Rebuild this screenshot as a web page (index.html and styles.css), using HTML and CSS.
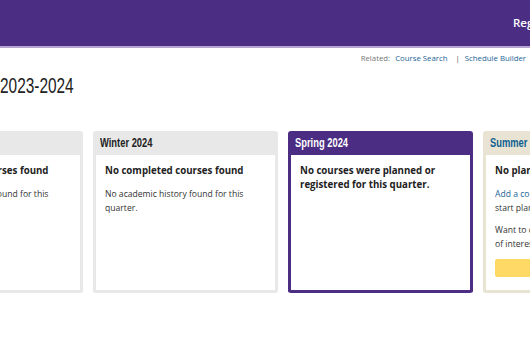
FILE: index.html
```html
<!DOCTYPE html>
<html lang="en">
<head>
  <meta charset="UTF-8">
  <meta name="viewport" content="width=device-width, initial-scale=1">
  <title>Academic Year 2023-2024</title>
  <link rel="stylesheet" href="styles.css">
</head>
<body>

  <header class="topbar">
    <nav class="topnav">
      <a href="#">Registration</a>
    </nav>
  </header>

  <div class="related">
    <span class="related-label">Related:</span>
    <a href="#">Course Search</a>
    <span class="sep">|</span>
    <a href="#">Schedule Builder</a>
  </div>

  <h1 class="year"><span class="cond">2023-2024</span></h1>

  <div class="quarters">
    <section class="card">
      <h2 class="card-head"><span class="cond">Autumn 2023</span></h2>
      <div class="card-body">
        <p class="strong">No completed courses found</p>
        <p>No academic history found for this quarter.</p>
      </div>
    </section>

    <section class="card">
      <h2 class="card-head"><span class="cond">Winter 2024</span></h2>
      <div class="card-body">
        <p class="strong">No completed courses found</p>
        <p>No academic history found for this quarter.</p>
      </div>
    </section>

    <section class="card current">
      <h2 class="card-head"><span class="cond">Spring 2024</span></h2>
      <div class="card-body">
        <p class="strong">No courses were planned or registered for this quarter.</p>
      </div>
    </section>

    <section class="card future">
      <h2 class="card-head"><span class="cond">Summer 2024</span></h2>
      <div class="card-body">
        <p class="strong">No planned courses</p>
        <p><a href="#">Add a course</a> to this quarter to<br>start planning.</p>
        <p>Want to explore more courses<br>of interest?</p>
        <button class="btn">Search Courses</button>
      </div>
    </section>
  </div>

</body>
</html>
```

FILE: styles.css
```css
* { box-sizing: border-box; margin: 0; padding: 0; }

body {
  font-family: 'Open Sans', sans-serif;
  font-size: 8.6px;
  color: #333;
  background: #fff;
  width: 530px;
  overflow: hidden;
}

a { color: #1a6496; text-decoration: none; }

/* texto estrecho para titulos */
.cond {
  display: inline-block;
  white-space: nowrap;
  transform-origin: left center;
}

.topbar {
  height: 48px;
  background: #4b2e83;
  border-bottom: 2px solid #b5a5d2;
  overflow: hidden;
}
.topnav {
  padding: 15px 0 0 513px;
  white-space: nowrap;
}
.topnav a {
  color: #fff;
  font-size: 11.5px;
  font-weight: 600;
}

.related {
  display: flex;
  justify-content: flex-end;
  gap: 5px;
  padding: 3px 4px 0 0;
  font-size: 7.8px;
  line-height: 14px;
}
.related-label { color: #777; }
.related .sep { color: #555; margin: 0 0 0 3px; }

.year {
  font-family: 'Liberation Sans', sans-serif;
  font-weight: normal;
  font-size: 22px;
  color: #222;
  margin: 8px 0 0 0;
  line-height: 26px;
}
.year .cond { transform: scaleX(0.7); }

.quarters {
  display: flex;
  gap: 10px;
  margin: 32px 0 0 -102px;
}

.card {
  flex: 0 0 185px;
  height: 162px;
  border: 3px solid #e8e8e8;
  border-top: none;
  border-radius: 3px;
  display: flex;
  flex-direction: column;
}
.card-head {
  background: #e8e8e8;
  height: 24px;
  padding: 3px 0 0 4px;
  font-family: 'Liberation Sans', sans-serif;
  font-size: 13px;
  font-weight: bold;
  color: #222;
  line-height: 18px;
}
.card-head .cond { transform: scaleX(0.72); }

.card-body {
  flex: 1;
  background: #fff;
  padding: 9px 9px 0 9px;
}
.card-body p {
  line-height: 14px;
  margin-bottom: 8px;
}
.card-body p.strong {
  font-weight: bold;
  font-size: 9.7px;
  color: #222;
  margin-bottom: 9px;
}

.card.current { border-color: #4b2e83; }
.card.current .card-head { background: #4b2e83; color: #fff; }

.card.future { border-color: #e8e3d3; }
.card.future .card-head { background: #e8e3d3; color: #0f5f8f; }

.btn {
  display: block;
  width: 100%;
  height: 18px;
  margin-top: 7px;
  border: none;
  border-radius: 2px;
  background: #ffd966;
  color: #333;
  font-family: 'Open Sans', sans-serif;
  font-size: 9px;
  font-weight: 600;
}
```
